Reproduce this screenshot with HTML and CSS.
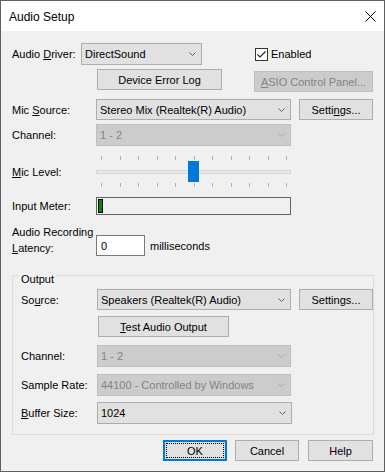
FILE: index.html
```html
<!DOCTYPE html>
<html>
<head>
<meta charset="utf-8">
<link rel="stylesheet" href="styles.css">
</head>
<body>
<div class="window">
  <div class="titlebar">
    <span class="title">Audio Setup</span>
    <svg class="close" width="11" height="11" viewBox="0 0 11 11"><path d="M0.5 0.5 L10.5 10.5 M10.5 0.5 L0.5 10.5" stroke="#000" stroke-width="1" fill="none"/></svg>
  </div>
  <div class="content">
    <div class="row r1">
      <span class="lbl w-driver">Audio <u>D</u>river:</span>
      <div class="combo w-driver-combo"><span class="val">DirectSound</span><svg class="chev" width="7" height="4" viewBox="0 0 7 4"><polyline points="0.5,0.5 3.5,3.5 6.5,0.5" fill="none" stroke="#606060" stroke-width="1"/></svg></div>
      <div class="check">
        <span class="box"><svg width="11" height="11" viewBox="0 0 11 11"><polyline points="1.5,5.5 4,8 9.5,2.5" fill="none" stroke="#222" stroke-width="1.1"/></svg></span>
        <span>Enabled</span>
      </div>
    </div>
    <div class="row r2">
      <div class="btn btn-errlog">Device Error Log</div>
      <div class="btn disabled btn-asio"><span><u>A</u>SIO Control Panel...</span></div>
    </div>
    <div class="row r3">
      <span class="lbl w-main">Mic <u>S</u>ource:</span>
      <div class="combo w-main-combo"><span class="val">Stereo Mix (Realtek(R) Audio)</span><svg class="chev" width="7" height="4" viewBox="0 0 7 4"><polyline points="0.5,0.5 3.5,3.5 6.5,0.5" fill="none" stroke="#606060" stroke-width="1"/></svg></div>
      <div class="btn btn-settings">Setti<u>n</u>gs...</div>
    </div>
    <div class="row r4">
      <span class="lbl w-main">Channel:</span>
      <div class="combo disabled w-main-combo"><span class="val">1 - 2</span><svg class="chev" width="7" height="4" viewBox="0 0 7 4"><polyline points="0.5,0.5 3.5,3.5 6.5,0.5" fill="none" stroke="#a8a8a8" stroke-width="1"/></svg></div>
    </div>
    <div class="row r5">
      <span class="lbl w-main"><u>M</u>ic Level:</span>
      <div class="slider">
        <div class="ticks"><i></i><i></i><i></i><i></i><i></i><i></i><i></i><i></i><i></i><i></i><i></i></div>
        <div class="slide-mid">
          <div class="track"></div>
          <div class="thumb"></div>
        </div>
        <div class="ticks"><i></i><i></i><i></i><i></i><i></i><i></i><i></i><i></i><i></i><i></i><i></i></div>
      </div>
    </div>
    <div class="row r6">
      <span class="lbl w-main">Input Meter:</span>
      <div class="meter"><div class="meter-bar"></div></div>
    </div>
    <div class="row r7">
      <span class="lbl w-main two">Audio Recording<br><u>L</u>atency:</span>
      <div class="edit">0</div>
      <span class="ms">milliseconds</span>
    </div>
    <div class="group">
      <span class="legend">Output</span>
      <div class="row g1">
        <span class="lbl w-grp">So<u>u</u>rce:</span>
        <div class="combo w-grp-combo"><span class="val">Speakers (Realtek(R) Audio)</span><svg class="chev" width="7" height="4" viewBox="0 0 7 4"><polyline points="0.5,0.5 3.5,3.5 6.5,0.5" fill="none" stroke="#606060" stroke-width="1"/></svg></div>
        <div class="btn btn-settings">Settings...</div>
      </div>
      <div class="row g2">
        <div class="btn btn-test"><span><u>T</u>est Audio Output</span></div>
      </div>
      <div class="row g3">
        <span class="lbl w-grp">Channel:</span>
        <div class="combo disabled w-grp-combo"><span class="val">1 - 2</span><svg class="chev" width="7" height="4" viewBox="0 0 7 4"><polyline points="0.5,0.5 3.5,3.5 6.5,0.5" fill="none" stroke="#a8a8a8" stroke-width="1"/></svg></div>
      </div>
      <div class="row g4">
        <span class="lbl w-grp">Sample Rate:</span>
        <div class="combo disabled w-grp-combo"><span class="val">44100 - Controlled by Windows</span><svg class="chev" width="7" height="4" viewBox="0 0 7 4"><polyline points="0.5,0.5 3.5,3.5 6.5,0.5" fill="none" stroke="#a8a8a8" stroke-width="1"/></svg></div>
      </div>
      <div class="row g5">
        <span class="lbl w-grp"><u>B</u>uffer Size:</span>
        <div class="combo w-buf-combo"><span class="val">1024</span><svg class="chev" width="7" height="4" viewBox="0 0 7 4"><polyline points="0.5,0.5 3.5,3.5 6.5,0.5" fill="none" stroke="#606060" stroke-width="1"/></svg></div>
      </div>
    </div>
    <div class="row buttons">
      <div class="btn btn-ok"><div class="focus">OK</div></div>
      <div class="btn btn-cancel">Cancel</div>
      <div class="btn btn-help">Help</div>
    </div>
  </div>
</div>
</body>
</html>
```

FILE: styles.css
```css
* { box-sizing: border-box; }
html, body { margin: 0; padding: 0; background: #f0f0f0; }
body {
  font-family: "Liberation Sans", Arial, sans-serif;
  font-size: 11px;
  color: #000;
}
u { text-decoration: underline; text-underline-offset: 1px; }

.window {
  width: 385px;
  height: 472px;
  border: 1px solid #5f5f5f;
  background: #f0f0f0;
  display: flex;
  flex-direction: column;
}
.titlebar {
  height: 30px;
  flex: none;
  background: #fff;
  display: flex;
  align-items: center;
  justify-content: space-between;
  padding: 0 8px 0 8px;
}
.title { font-size: 12px; padding-top: 1px; }
.close { display: block; margin-top: 1px; }

.content {
  flex: 1;
  padding: 12px 11px 0 11px;
  display: flex;
  flex-direction: column;
}
.row { display: flex; align-items: center; flex: none; }

.lbl { flex: none; white-space: nowrap; }
.w-driver { width: 69px; }
.w-main { width: 84px; }
.w-grp { width: 76px; }

.combo {
  display: flex;
  align-items: center;
  justify-content: space-between;
  background: #e1e1e1;
  border: 1px solid #adadad;
  padding: 0 5px 0 3px;
  height: 100%;
  white-space: nowrap;
  overflow: hidden;
}
.combo.disabled { background: #cccccc; border-color: #bfbfbf; color: #838383; }
.chev { flex: none; display: block; }
.w-driver-combo { width: 121px; }
.w-main-combo { width: 195px; }
.w-grp-combo { width: 194px; }
.w-buf-combo { width: 195px; }

.btn {
  display: flex;
  align-items: center;
  justify-content: center;
  background: #e1e1e1;
  border: 1px solid #adadad;
  height: 21px;
  white-space: nowrap;
  flex: none;
}
.btn.disabled { background: #cccccc; border-color: #bfbfbf; color: #838383; }

/* row 1 */
.r1 { height: 22px; }
.check { display: flex; align-items: center; margin-left: 53px; }
.box {
  width: 13px; height: 13px;
  border: 1px solid #333;
  background: #fff;
  display: flex; align-items: center; justify-content: center;
  margin-right: 3px;
}
.box svg { display: block; }

/* row 2 */
.r2 { margin-top: 4px; height: 23px; align-items: flex-start; }
.btn-errlog { margin-left: 85px; width: 125px; }
.btn-asio { margin-left: 32px; margin-top: 2px; width: 119px; }

/* row 3 */
.r3 { margin-top: 7px; height: 21px; }
.btn-settings { margin-left: 8px; width: 74px; }

/* row 4 */
.r4 { margin-top: 4px; height: 22px; }

/* slider */
.r5 { margin-top: 10px; height: 31px; }
.slider { width: 195px; display: flex; flex-direction: column; }
.ticks {
  height: 4px;
  display: flex;
  justify-content: space-between;
  padding: 0 4px 0 5px;
}
.ticks i { display: block; width: 1px; height: 4px; background: #b0b0b0; }
.slide-mid { height: 23px; position: relative; }
.track {
  margin-top: 10px;
  height: 4px;
  background: #e7eaea;
  border: 1px solid #d6d6d6;
}
.thumb {
  position: absolute;
  left: 92px;
  top: 1px;
  width: 11px;
  height: 21px;
  background: #0078d7;
}

/* meter */
.r6 { margin-top: 10px; height: 18px; }
.meter {
  width: 195px;
  height: 18px;
  border: 1px solid #646464;
  background: #f0f0f0;
  padding: 1px;
}
.meter-bar {
  width: 5px;
  height: 14px;
  border: 1px solid #000;
  background: #008a00;
}

/* latency */
.r7 { margin-top: 9px; align-items: flex-end; }
.two { line-height: 16px; }
.edit {
  width: 49px;
  height: 21px;
  background: #fff;
  border: 1px solid #7a7a7a;
  padding-left: 4px;
  display: flex;
  align-items: center;
}
.ms { margin-left: 5px; height: 21px; display: flex; align-items: center; }

/* group */
.group {
  margin-top: 19px;
  width: 362px;
  height: 160px;
  border: 1px solid #dcdcdc;
  padding: 0 0 0 8px;
  display: flex;
  flex-direction: column;
  flex: none;
}
.legend {
  display: block;
  align-self: flex-start;
  line-height: 16px;
  margin: -5px 0 0 -2px;
  padding: 0 2px;
  background: #f0f0f0;
}
.g1 { margin-top: 2px; height: 21px; }
.g2 { margin-top: 6px; }
.btn-test { margin-left: 77px; width: 131px; }
.g3 { margin-top: 8px; height: 22px; }
.g4 { margin-top: 7px; height: 22px; }
.g5 { margin-top: 6px; height: 22px; }

/* buttons */
.buttons { margin-top: 5px; justify-content: flex-end; }
.btn-ok {
  width: 64px;
  border: 2px solid #0078d7;
  padding: 1px;
  align-items: stretch;
}
.btn-ok .focus {
  flex: 1;
  border: 1px dotted #000;
  display: flex;
  align-items: center;
  justify-content: center;
}
.btn-cancel { margin-left: 8px; width: 64px; }
.btn-help { margin-left: 9px; width: 65px; }
```
